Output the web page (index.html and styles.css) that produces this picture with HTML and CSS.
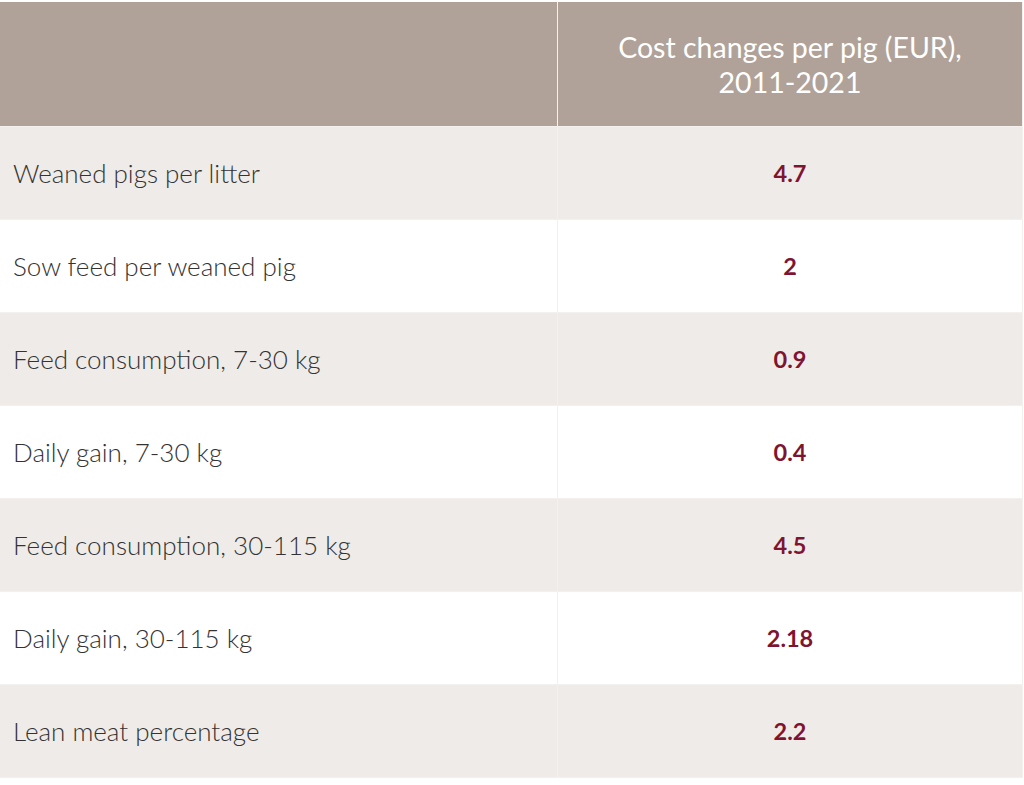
FILE: index.html
```html
<!DOCTYPE html>
<html>
<head>
<meta charset="utf-8">
<link rel="stylesheet" href="styles.css">
</head>
<body>
<table class="costs">
  <thead>
    <tr>
      <th class="label-col"></th>
      <th class="value-col">Cost changes per pig (EUR),<br>2011-2021</th>
    </tr>
  </thead>
  <tbody>
    <tr><td class="label">Weaned pigs per litter</td><td class="value">4.7</td></tr>
    <tr><td class="label">Sow feed per weaned pig</td><td class="value">2</td></tr>
    <tr><td class="label">Feed consumption, 7-30 kg</td><td class="value">0.9</td></tr>
    <tr><td class="label">Daily gain, 7-30 kg</td><td class="value">0.4</td></tr>
    <tr><td class="label">Feed consumption, 30-115 kg</td><td class="value">4.5</td></tr>
    <tr><td class="label">Daily gain, 30-115 kg</td><td class="value">2.18</td></tr>
    <tr><td class="label">Lean meat percentage</td><td class="value">2.2</td></tr>
  </tbody>
</table>
</body>
</html>
```
FILE: styles.css
```css
html, body {
  margin: 0;
  padding: 0;
  background: #ffffff;
}
body {
  padding-top: 2px;
  font-family: Lato, "Open Sans", sans-serif;
}
.costs {
  width: 1023px;
  border-collapse: collapse;
  table-layout: fixed;
}
.costs th, .costs td {
  border: 1px solid #f3f0ee;
  padding: 0;
}
.label-col {
  width: 557px;
}
.costs thead th {
  background: #b0a299;
  height: 122px;
  color: #ffffff;
  font-weight: 400;
  font-size: 28.5px;
  line-height: 35px;
  text-align: center;
  vertical-align: middle;
  padding-top: 2px;
}
.costs thead tr th {
  border-top: none;
  border-left: none;
}
.costs tbody tr:nth-child(odd) td {
  background: #efebe8;
}
.costs tbody tr:nth-child(even) td {
  background: #ffffff;
}
.costs tbody td {
  height: 92px;
  vertical-align: middle;
}
.label {
  padding-left: 13px !important;
  font-size: 26px;
  font-weight: 300;
  color: #333333;
  border-left: none !important;
}
.value {
  text-align: center;
  font-size: 23.5px;
  font-weight: 700;
  color: #7f1430;
}
```
